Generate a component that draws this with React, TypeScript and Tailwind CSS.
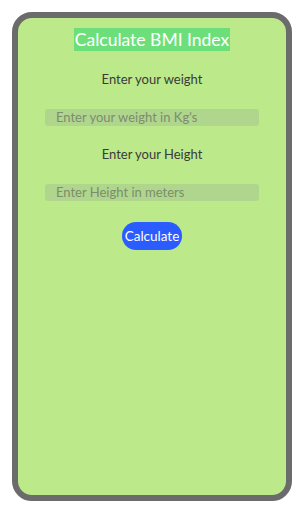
export default function App() {
  return (
    <div className="w-[300px] h-[518px] bg-white p-3 font-['Lato',sans-serif]">
      <div className="w-[280px] h-[489px] border-[6px] border-[#6b6b6b] rounded-[20px] bg-[#bce98a] flex flex-col items-center">
        <h1 className="mt-[10px] h-[23px] px-[1px] bg-[#6ddf7a] text-white text-[17.5px] leading-[23px]">
          Calculate BMI Index
        </h1>
        <p className="mt-[19px] text-[13px] leading-[18px] text-[#3a3a3a]">Enter your weight</p>
        <input
          className="mt-[21px] w-[214px] h-[17px] rounded-[3px] bg-[#b0d68d] pl-[11px] text-[13px] text-[#333] placeholder:text-[#7c8c6c] outline-none"
          placeholder="Enter your weight in Kg's"
        />
        <p className="mt-[19px] text-[13px] leading-[18px] text-[#3a3a3a]">Enter your Height</p>
        <input
          className="mt-[21px] w-[214px] h-[17px] rounded-[3px] bg-[#b0d68d] pl-[11px] text-[13px] text-[#333] placeholder:text-[#7c8c6c] outline-none"
          placeholder="Enter Height in meters"
        />
        <button className="mt-[21px] h-[28px] px-[3px] rounded-full bg-[#2b5cff] text-white text-[13.5px]">
          Calculate
        </button>
      </div>
    </div>
  );
}
